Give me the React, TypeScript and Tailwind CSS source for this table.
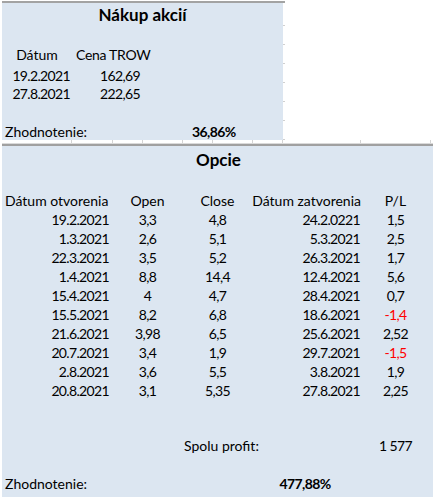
import React from "react";

const font = { fontFamily: "Lato, 'Liberation Sans', sans-serif" };

const rows = [
  ["19.2.2021", "3,3", "4,8", "24.2.0221", "1,5"],
  ["1.3.2021", "2,6", "5,1", "5.3.2021", "2,5"],
  ["22.3.2021", "3,5", "5,2", "26.3.2021", "1,7"],
  ["1.4.2021", "8,8", "14,4", "12.4.2021", "5,6"],
  ["15.4.2021", "4", "4,7", "28.4.2021", "0,7"],
  ["15.5.2021", "8,2", "6,8", "18.6.2021", "-1,4"],
  ["21.6.2021", "3,98", "6,5", "25.6.2021", "2,52"],
  ["20.7.2021", "3,4", "1,9", "29.7.2021", "-1,5"],
  ["2.8.2021", "3,6", "5,5", "3.8.2021", "1,9"],
  ["20.8.2021", "3,1", "5,35", "27.8.2021", "2,25"],
];

export default function App() {
  return (
    <div
      className="w-[433px] h-[497px] bg-white text-[14px] text-black overflow-hidden pt-[1px]"
      style={font}
    >
      {/* top line */}
      <div className="ml-[2px] w-[283px] h-[2px] bg-[#a3a3a3]" />
      <div className="flex ml-[2px]">
        <div className="w-[281px] bg-[#dce6f1] flex flex-col">
          <div className="h-[23px] flex items-center justify-center font-bold text-[17px] pt-[1px]">
            Nákup akcií
          </div>
          <div className="h-[19px]" />
          <div className="h-[19px] flex items-end leading-[19px] pt-[2px]">
            <span className="w-[70px] text-center">Dátum</span>
            <span className="pl-[4px] tracking-[-0.3px]">Cena TROW</span>
          </div>
          <div className="h-[19px] flex leading-[19px] pt-[2px] tracking-[-0.65px]">
            <span className="w-[68px] text-right">19.2.2021</span>
            <span className="w-[70px] text-right">162,69</span>
          </div>
          <div className="h-[19px] flex leading-[19px] pt-[1px] tracking-[-0.65px]">
            <span className="w-[68px] text-right">27.8.2021</span>
            <span className="w-[70px] text-right">222,65</span>
          </div>
          <div className="h-[19px]" />
          <div className="h-[19px] flex leading-[19px] pt-[1px]">
            <span className="w-[190px] pl-[3px]">Zhodnotenie:</span>
            <span className="font-bold tracking-[-0.6px]">36,86%</span>
          </div>
        </div>
        <div className="w-[2px] flex flex-col">
          <div className="h-[23px] border-b border-[#d0d0d0]" />
          <div className="h-[19px] border-b border-[#d0d0d0]" />
          <div className="h-[19px] border-b border-[#d0d0d0]" />
          <div className="h-[19px] border-b border-[#d0d0d0]" />
          <div className="h-[19px] border-b border-[#d0d0d0]" />
          <div className="h-[19px] border-b border-[#d0d0d0]" />
          <div className="h-[19px] border-b border-[#d0d0d0]" />
        </div>
      </div>
      {/* gap with grid ticks */}
      <div className="flex ml-[2px] h-[3px]">
        <div className="w-[70px] border-r border-[#d4d4d4]" />
        <div className="w-[41px] border-r border-[#d4d4d4]" />
        <div className="w-[30px] border-r border-[#d4d4d4]" />
        <div className="w-[40px] border-r border-[#d4d4d4]" />
        <div className="w-[30px] border-r border-[#d4d4d4]" />
        <div className="w-[40px] border-r border-[#d4d4d4]" />
        <div className="w-[30px] border-r border-[#d4d4d4]" />
        <div className="w-[78px] border-r border-[#d4d4d4]" />
        <div className="w-[70px] border-r border-[#d4d4d4]" />
      </div>
      <div className="ml-[2px] h-[1px] bg-[#dadada]" />
      <div className="ml-[2px] h-[2px] bg-[#a0a0a0]" />
      {/* bottom panel */}
      <div className="ml-[2px] h-[352px] bg-[#dce6f1] flex flex-col">
        <div className="h-[27px] flex items-center justify-center font-bold text-[17px] pl-[2px] pt-[1px]">
          Opcie
        </div>
        <div className="h-[17px]" />
        <div className="h-[19px] flex leading-[19px] pt-[1px]">
          <span className="w-[110px] pl-[3px]">Dátum otvorenia</span>
          <span className="w-[71px] text-center">Open</span>
          <span className="w-[69px] text-center">Close</span>
          <span className="w-[110px] text-right pr-[1px]">Dátum zatvorenia</span>
          <span className="w-[67px] text-center">P/L</span>
        </div>
        {rows.map((r, i) => (
          <div
            key={i}
            className="h-[19px] flex leading-[19px] pt-[1px] tracking-[-0.65px]"
          >
            <span className="w-[110px] text-right pr-[3px]">{r[0]}</span>
            <span className="w-[71px] text-center">{r[1]}</span>
            <span className="w-[69px] text-center">{r[2]}</span>
            <span className="w-[110px] text-right pr-[2px]">{r[3]}</span>
            <span
              className={
                r[4].startsWith("-")
                  ? "w-[67px] text-center text-[#ff0000]"
                  : "w-[67px] text-center"
              }
            >
              {r[4]}
            </span>
          </div>
        ))}
        <div className="h-[36px]" />
        <div className="h-[19px] flex leading-[19px] pt-[1px]">
          <span className="w-[181px]" />
          <span className="w-[179px] pl-[1px]">Spolu profit:</span>
          <span className="w-[67px] text-center tracking-[-0.65px]">1 577</span>
        </div>
        <div className="h-[19px]" />
        <div className="h-[19px] flex leading-[19px] pt-[1px]">
          <span className="w-[250px] pl-[3px]">Zhodnotenie:</span>
          <span className="w-[106px] text-center font-bold tracking-[-0.6px]">
            477,88%
          </span>
        </div>
      </div>
    </div>
  );
}
